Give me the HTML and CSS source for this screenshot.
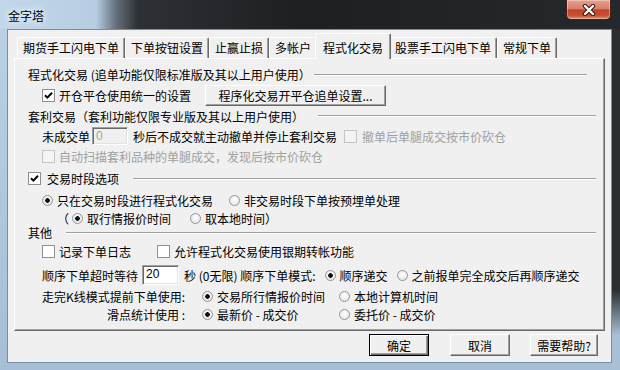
FILE: index.html
```html
<!DOCTYPE html>
<html lang="zh-CN">
<head>
  <meta charset="UTF-8" />
  <title>金字塔</title>
  <link rel="stylesheet" href="styles.css">
</head>
<body>

  <div class="window">
    <div class="titlebar">
      <span class="title">金字塔</span>
      <span class="close">
        <svg width="14" height="12" viewBox="0 0 14 12">
          <path d="M3 2 L11 10 M11 2 L3 10" stroke="#3b1610" stroke-width="4.4" stroke-linecap="round" />
          <path d="M3 2 L11 10 M11 2 L3 10" stroke="#fff" stroke-width="2.4" stroke-linecap="round" />
        </svg>
      </span>
    </div>

    <div class="client">
      <div class="tabs">
        <span class="tab">期货手工闪电下单</span>
        <span class="tab">下单按钮设置</span>
        <span class="tab">止赢止损</span>
        <span class="tab">多帐户</span>
        <span class="tab active">程式化交易</span>
        <span class="tab">股票手工闪电下单</span>
        <span class="tab">常规下单</span>
      </div>

      <div class="panel">
        <!-- 程式化交易 -->
        <div class="row">
          <span>程式化交易 (追单功能仅限标准版及其以上用户使用）</span>
          <span class="sep short"></span>
        </div>
        <div class="row sub">
          <span class="check"><svg width="9" height="9" viewBox="0 0 9 9"><path d="M1 4.2 L3.4 6.6 L8 1.8" fill="none" stroke="#000" stroke-width="2" /></svg></span>
          <span>开仓平仓使用统一的设置</span>
          <span class="btn setup">程序化交易开平仓追单设置...</span>
        </div>

        <!-- 套利交易 -->
        <div class="row h20">
          <span>套利交易（套利功能仅限专业版及其以上用户使用）</span>
          <span class="sep"></span>
        </div>
        <div class="row sub h20">
          <span>未成交单</span>
          <span class="field off">0</span>
          <span>秒后不成交就主动撤单并停止套利交易</span>
          <span class="check off gap"></span>
          <span class="gray">撤单后单腿成交按市价砍仓</span>
        </div>
        <div class="row sub">
          <span class="check off"></span>
          <span class="gray">自动扫描套利品种的单腿成交，发现后按市价砍仓</span>
        </div>

        <!-- 交易时段 -->
        <div class="row h23">
          <span class="check"><svg width="9" height="9" viewBox="0 0 9 9"><path d="M1 4.2 L3.4 6.6 L8 1.8" fill="none" stroke="#000" stroke-width="2" /></svg></span>
          <span class="label-gap">交易时段选项</span>
          <span class="sep"></span>
        </div>
        <div class="row sub h20">
          <span class="radio on"></span>
          <span class="opt-text">只在交易时段进行程式化交易</span>
          <span class="radio"></span>
          <span>非交易时段下单按预埋单处理</span>
        </div>
        <div class="row paren h17">
          <span>（</span>
          <span class="radio on"></span>
          <span class="opt-text">取行情报价时间</span>
          <span class="radio"></span>
          <span>取本地时间</span>
          <span>）</span>
        </div>

        <!-- 其他 -->
        <div class="row h11">
          <span>其他</span>
          <span class="sep"></span>
        </div>
        <div class="row sub h26">
          <span class="check"></span>
          <span class="opt-wide">记录下单日志</span>
          <span class="check"></span>
          <span>允许程式化交易使用银期转帐功能</span>
        </div>
        <div class="row sub h22">
          <span>顺序下单超时等待</span>
          <span class="field wait">20</span>
          <span>秒 (0无限) 顺序下单模式:</span>
          <span class="radio on lead"></span>
          <span class="opt-near">顺序递交</span>
          <span class="radio"></span>
          <span>之前报单完全成交后再顺序递交</span>
        </div>
        <div class="row sub">
          <span class="opt-label">走完K线模式提前下单使用:</span>
          <span class="opt"><span class="radio on"></span>交易所行情报价时间</span>
          <span class="opt"><span class="radio"></span>本地计算机时间</span>
        </div>
        <div class="row sub h15">
          <span class="opt-label">滑点统计使用 :</span>
          <span class="opt"><span class="radio on"></span>最新价 - 成交价</span>
          <span class="opt"><span class="radio"></span>委托价 - 成交价</span>
        </div>
      </div>

      <div class="actions">
        <span class="btn default">确定</span>
        <span class="btn cancel">取消</span>
        <span class="btn help">需要帮助?</span>
      </div>
    </div>
  </div>

</body>
</html>
```

FILE: styles.css
```css
* {
  box-sizing: border-box;
}

body {
  margin: 0;
  width: 620px;
  height: 370px;
  overflow: hidden;
  font-family: "Noto Sans CJK SC", "Noto Sans", sans-serif;
  font-size: 12px;
  color: #000;
}

.window {
  height: 370px;
  display: flex;
  flex-direction: column;
  padding: 0 8px 7px 7px;
  background:
    linear-gradient(90deg, #c3d7eb 0, #b7cde3 96px, #66707b 116px, #2d3035 138px, #1d1f22 300px, #26292c 100%) top left / 100% 29px no-repeat,
    linear-gradient(180deg, #2b2d30 0, #2b2d30 290px, #a8bfd5 335px) top right / 8px 100% no-repeat,
    linear-gradient(180deg, #bcd1e6, #a6bed6);
}

/* title bar */
.titlebar {
  height: 29px;
  display: flex;
  justify-content: space-between;
  align-items: flex-start;
}

.title {
  margin: 8px 0 0 1px;
  line-height: 16px;
  text-shadow: 0 0 6px #fff, 0 0 10px rgba(255, 255, 255, 0.8);
}

.close {
  width: 45px;
  height: 20px;
  margin-right: 1px;
  display: flex;
  align-items: center;
  justify-content: center;
  border: 1px solid #4a1d15;
  border-top: 0;
  border-radius: 0 0 5px 5px;
  background: linear-gradient(#e6a18f, #d8806a 45%, #c2442c 52%, #c94b31 80%, #e08d6e);
  box-shadow: inset 0 0 0 1px rgba(255, 255, 255, 0.35);
}

/* dialog body */
.client {
  flex: 1;
  display: flex;
  flex-direction: column;
  padding: 3px 6px 0;
  background: #f0f0f0;
  border: 1px solid #7a8ea3;
}

.tabs {
  display: flex;
  align-items: flex-end;
  height: 25px;
  margin-left: 3px;
}

.tab {
  height: 21px;
  line-height: 19px;
  padding: 0 5px;
  white-space: nowrap;
  border: 1px solid #fff;
  border-right-color: #696969;
  border-bottom: 0;
  border-radius: 2px 2px 0 0;
  box-shadow: inset -1px 0 0 #a0a0a0;
}

.tab.active {
  position: relative;
  z-index: 1;
  height: 26px;
  margin: 0 -2px -1px;
  padding: 4px 7px 2px;
  background: #f0f0f0;
}

.panel {
  height: 273px;
  padding: 5px 8px 0 13px;
  border: 1px solid #fff;
  border-right-color: #696969;
  border-bottom-color: #696969;
  box-shadow: inset -1px -1px 0 #a0a0a0;
}

.row {
  display: flex;
  align-items: center;
  height: 21px;
  white-space: nowrap;
}

.h11 { height: 11px; }
.h15 { height: 15px; }
.h17 { height: 17px; }
.h20 { height: 20px; }
.h22 { height: 22px; }
.h23 { height: 23px; }
.h26 { height: 26px; }

.sub {
  padding-left: 14px;
}

.paren {
  padding-left: 29px;
}

.paren .radio {
  margin-left: 3px;
}

.sep {
  flex: 1;
  height: 2px;
  margin-left: 14px;
  border-top: 1px solid #a0a0a0;
  border-bottom: 1px solid #fff;
}

.sep.short {
  margin: 0 9px 0 3px;
}

.gray {
  color: #a0a0a0;
}

/* controls */
.check {
  flex: none;
  width: 13px;
  height: 13px;
  margin-right: 4px;
  display: inline-flex;
  align-items: center;
  justify-content: center;
  border: 1px solid #8e8f8f;
  background: #fff;
}

.check.off {
  border-color: #c5c5c5;
  background: #f4f4f4;
}

.check.gap {
  margin-left: 7px;
  margin-right: 5px;
}

.label-gap {
  margin-left: 2px;
}

.radio {
  flex: none;
  width: 11px;
  height: 11px;
  margin-right: 4px;
  border: 1px solid #959595;
  border-radius: 50%;
  background: radial-gradient(circle at 50% 40%, #fff, #e0e0e0);
}

.radio.on {
  background:
    radial-gradient(circle, #111 0 2px, transparent 2.6px),
    radial-gradient(circle at 50% 40%, #fff, #e0e0e0);
}

.radio.lead {
  margin-left: 9px;
}

.opt-text {
  margin-right: 16px;
}

.opt-wide {
  margin-right: 26px;
}

.opt-near {
  margin-right: 9px;
}

.opt-label {
  width: 143px;
  margin-right: 17px;
  text-align: right;
}

.opt {
  width: 137px;
  display: flex;
  align-items: center;
}

.field {
  width: 36px;
  height: 18px;
  margin: 0 5px 0 2px;
  padding: 1px 0 0 3px;
  font: 12px/14px "Liberation Sans", sans-serif;
  border: 1px solid;
  border-color: #a0a0a0 #fff #fff #a0a0a0;
  box-shadow: inset 1px 1px 0 #696969, inset -1px -1px 0 #e3e3e3;
  background: #fff;
}

.field.off {
  color: #a0a0a0;
  background: #f0f0f0;
}

.field.wait {
  width: 37px;
  height: 20px;
  margin-left: 4px;
}

.btn {
  display: flex;
  align-items: center;
  justify-content: center;
  height: 21px;
  background: #f0f0f0;
  border: 1px solid;
  border-color: #fff #696969 #696969 #fff;
  box-shadow: inset -1px -1px 0 #a0a0a0;
}

.btn.setup {
  width: 181px;
  margin-left: 14px;
}

.actions {
  display: flex;
  justify-content: flex-end;
  gap: 20px;
  margin-top: 3px;
  padding-right: 7px;
}

.actions .btn {
  height: 22px;
  width: 60px;
}

.actions .btn.help {
  width: 68px;
}

.btn.default {
  margin-right: 1px;
  border-color: #000;
  box-shadow: inset 1px 1px 0 #fff, inset -1px -1px 0 #696969, inset -2px -2px 0 #a0a0a0;
}
```
